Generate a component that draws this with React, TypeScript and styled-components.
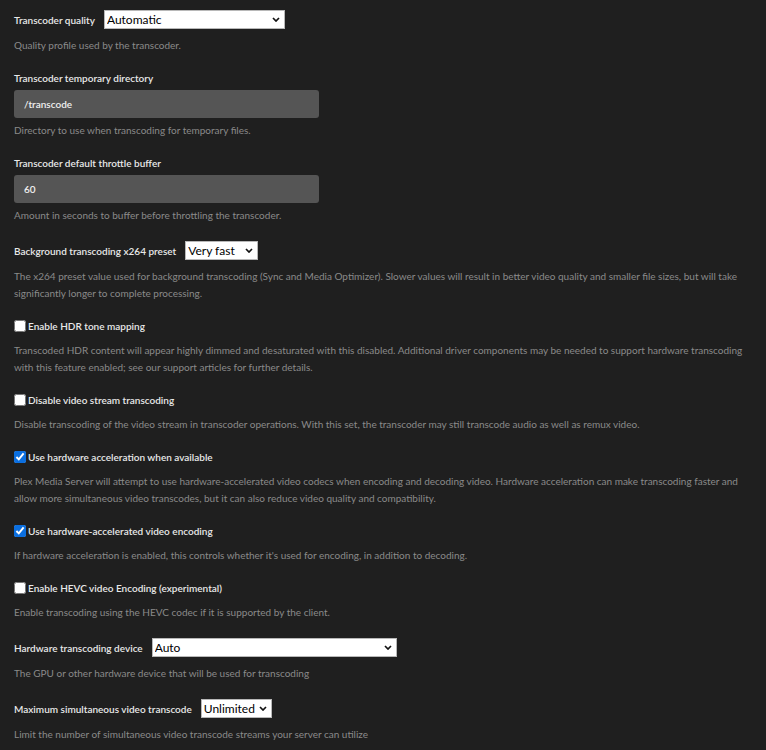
import React from "react";
import styled, { createGlobalStyle } from "styled-components";

const GlobalStyle = createGlobalStyle`
  html, body {
    margin: 0;
    background: #1f1f1f;
  }
`;

const Page = styled.div`
  box-sizing: border-box;
  min-height: 100vh;
  padding: 8px 14px 0;
  background: #1f1f1f;
  font-family: Lato, "Open Sans", sans-serif;
  font-size: 10px;
  line-height: 18px;
`;

const Group = styled.section`
  margin-bottom: 15px;
`;

const Row = styled.div<{ $tall?: boolean }>`
  display: flex;
  align-items: center;
  gap: 9px;
  height: ${(p) => (p.$tall ? "23px" : "18px")};
`;

const Label = styled.label`
  display: block;
  font-size: 10px;
  font-weight: 600;
  line-height: 18px;
  color: #e8e8e8;
  white-space: nowrap;
`;

const CheckLabel = styled(Label)`
  display: flex;
  align-items: center;
  gap: 2px;
  cursor: pointer;
`;

const Check = styled.input.attrs({ type: "checkbox" })`
  width: 12px;
  height: 12px;
  margin: 0;
  accent-color: #0b6fe0;
`;

const Help = styled.p<{ $gap?: number }>`
  margin: ${(p) => p.$gap ?? 7}px 0 0;
  font-size: 10px;
  line-height: 17px;
  color: #8a8a8a;
`;

const TextField = styled.input`
  display: block;
  box-sizing: border-box;
  width: 305px;
  height: 28px;
  margin-top: 3px;
  padding: 0 10px;
  border: 0;
  border-radius: 3px;
  background: #555555;
  color: #f0f0f0;
  font: 600 10px Lato, "Open Sans", sans-serif;
  outline: none;
`;

const SelectWrap = styled.span<{ $width: number }>`
  position: relative;
  display: inline-block;
  width: ${(p) => p.$width}px;
  height: 19px;
  svg {
    position: absolute;
    right: 5px;
    top: 7px;
    pointer-events: none;
  }
`;

const Select = styled.select`
  appearance: none;
  box-sizing: border-box;
  width: 100%;
  height: 100%;
  margin: 0;
  padding: 0 14px 0 2px;
  border: 1px solid #b8b8b8;
  border-radius: 0;
  background: #ffffff;
  color: #000000;
  font: 400 12px Lato, "Open Sans", sans-serif;
  outline: none;
`;

const Chevron = () => (
  <svg width="8" height="5" viewBox="0 0 8 5">
    <path d="M1 1l3 3 3-3" fill="none" stroke="#111" strokeWidth="1.7" />
  </svg>
);

type Option = { width: number; value: string; options: string[] };

const Dropdown: React.FC<Option> = ({ width, value, options }) => (
  <SelectWrap $width={width}>
    <Select defaultValue={value}>
      {options.map((o) => (
        <option key={o}>{o}</option>
      ))}
    </Select>
    <Chevron />
  </SelectWrap>
);

type Setting =
  | { kind: "select"; label: string; help: string; select: Option }
  | { kind: "text"; label: string; help: string; value: string }
  | { kind: "check"; label: string; help: string; checked: boolean };

const settings: Setting[] = [
  {
    kind: "select",
    label: "Transcoder quality",
    help: "Quality profile used by the transcoder.",
    select: {
      width: 181,
      value: "Automatic",
      options: ["Automatic", "Prefer higher speed encoding", "Prefer higher quality encoding", "Make my CPU hurt"],
    },
  },
  {
    kind: "text",
    label: "Transcoder temporary directory",
    help: "Directory to use when transcoding for temporary files.",
    value: "/transcode",
  },
  {
    kind: "text",
    label: "Transcoder default throttle buffer",
    help: "Amount in seconds to buffer before throttling the transcoder.",
    value: "60",
  },
  {
    kind: "select",
    label: "Background transcoding x264 preset",
    help: "The x264 preset value used for background transcoding (Sync and Media Optimizer). Slower values will result in better video quality and smaller file sizes, but will take significantly longer to complete processing.",
    select: {
      width: 73,
      value: "Very fast",
      options: ["Ultra fast", "Super fast", "Very fast", "Faster", "Fast", "Medium", "Slow", "Slower", "Very slow"],
    },
  },
  {
    kind: "check",
    label: "Enable HDR tone mapping",
    help: "Transcoded HDR content will appear highly dimmed and desaturated with this disabled. Additional driver components may be needed to support hardware transcoding with this feature enabled; see our support articles for further details.",
    checked: false,
  },
  {
    kind: "check",
    label: "Disable video stream transcoding",
    help: "Disable transcoding of the video stream in transcoder operations. With this set, the transcoder may still transcode audio as well as remux video.",
    checked: false,
  },
  {
    kind: "check",
    label: "Use hardware acceleration when available",
    help: "Plex Media Server will attempt to use hardware-accelerated video codecs when encoding and decoding video. Hardware acceleration can make transcoding faster and allow more simultaneous video transcodes, but it can also reduce video quality and compatibility.",
    checked: true,
  },
  {
    kind: "check",
    label: "Use hardware-accelerated video encoding",
    help: "If hardware acceleration is enabled, this controls whether it's used for encoding, in addition to decoding.",
    checked: true,
  },
  {
    kind: "check",
    label: "Enable HEVC video Encoding (experimental)",
    help: "Enable transcoding using the HEVC codec if it is supported by the client.",
    checked: false,
  },
  {
    kind: "select",
    label: "Hardware transcoding device",
    help: "The GPU or other hardware device that will be used for transcoding",
    select: { width: 245, value: "Auto", options: ["Auto"] },
  },
  {
    kind: "select",
    label: "Maximum simultaneous video transcode",
    help: "Limit the number of simultaneous video transcode streams your server can utilize",
    select: { width: 71, value: "Unlimited", options: ["Unlimited", "1", "2", "3", "4", "5", "10", "20"] },
  },
];

const SettingRow: React.FC<{ s: Setting }> = ({ s }) => {
  if (s.kind === "select") {
    return (
      <Group>
        <Row $tall>
          <Label>{s.label}</Label>
          <Dropdown {...s.select} />
        </Row>
        <Help $gap={6}>{s.help}</Help>
      </Group>
    );
  }
  if (s.kind === "text") {
    return (
      <Group>
        <Label>{s.label}</Label>
        <TextField defaultValue={s.value} />
        <Help $gap={4}>{s.help}</Help>
      </Group>
    );
  }
  return (
    <Group>
      <Row>
        <CheckLabel>
          <Check defaultChecked={s.checked} />
          {s.label}
        </CheckLabel>
      </Row>
      <Help>{s.help}</Help>
    </Group>
  );
};

export default function App() {
  return (
    <>
      <GlobalStyle />
      <Page>
        {settings.map((s) => (
          <SettingRow key={s.label} s={s} />
        ))}
      </Page>
    </>
  );
}
